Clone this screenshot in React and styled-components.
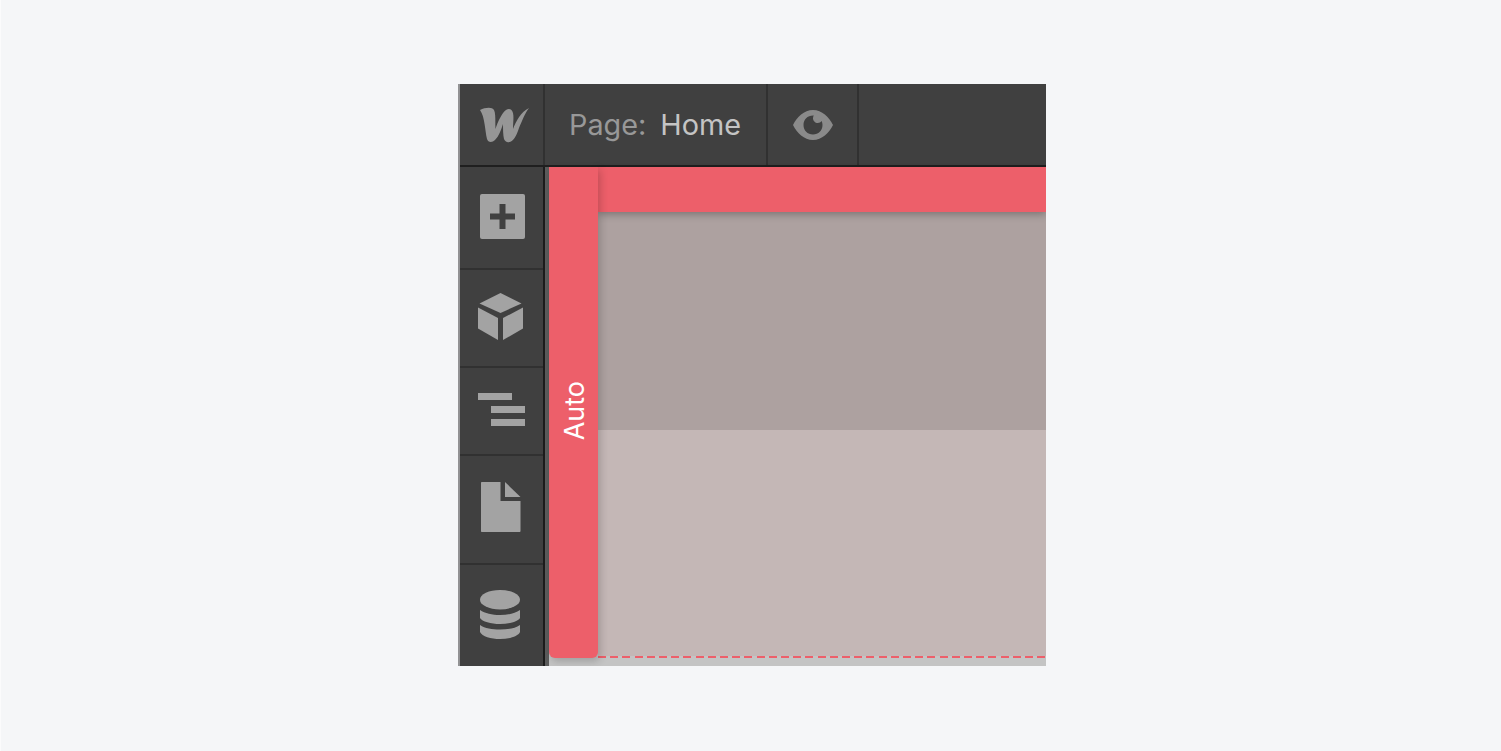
import React from "react";
import styled, { createGlobalStyle } from "styled-components";

const GlobalStyle = createGlobalStyle`
	html, body {
		margin: 0;
		padding: 0;
		background: #f5f6f8;
	}
`;

const Page = styled.div`
	width: 1501px;
	height: 751px;
	display: flex;
	align-items: flex-start;
	justify-content: flex-start;
	padding: 84px 0 0 458px;
	box-sizing: border-box;
	overflow: hidden;
	border-left: 1px solid #fbfbfc;
`;

const Frame = styled.div`
	width: 588px;
	height: 582px;
	margin-left: -1px;
	display: flex;
	flex-direction: column;
	background: #404040;
	border-left: 2px solid #929294;
	box-sizing: border-box;
	overflow: hidden;
	font-family: Inter, "Liberation Sans", sans-serif;
`;

const TopBar = styled.div`
	height: 83px;
	flex: none;
	display: flex;
	box-sizing: border-box;
	border-bottom: 2px solid #1f1f1f;
`;

const TopCell = styled.div`
	width: ${(p) => p.$width}px;
	flex: none;
	display: flex;
	align-items: center;
	justify-content: ${(p) => p.$justify || "center"};
	box-sizing: border-box;
	padding-left: ${(p) => p.$pad || 0}px;
	border-right: 2px solid #313131;
`;

const PageLabel = styled.span`
	font-size: 28.8px;
	color: #989898;
	margin-right: 14px;
`;

const PageName = styled.span`
	font-size: 28.8px;
	color: #c4c4c4;
`;

const Body = styled.div`
	flex: 1;
	display: flex;
	min-height: 0;
`;

const Sidebar = styled.div`
	width: 83px;
	flex: none;
	display: flex;
	flex-direction: column;
	border-right: 2px solid #1c1c1c;
	box-sizing: content-box;
`;

const SideItem = styled.div`
	height: ${(p) => p.$height}px;
	flex: none;
	display: flex;
	align-items: center;
	justify-content: center;
	box-sizing: border-box;
	padding: 0 ${(p) => p.$right || 0}px ${(p) => p.$up || 0}px ${(p) => p.$left || 0}px;
	border-bottom: ${(p) => (p.$last ? "none" : "2px solid #313131")};
`;

const Canvas = styled.div`
	flex: 1;
	display: flex;
	flex-direction: column;
	background: #c4c4c4;
	padding-left: 4px;
	box-shadow: inset 4px 0 0 #5c5c5c;
`;

const CanvasMain = styled.div`
	height: 491px;
	flex: none;
	display: flex;
`;

const HeightTag = styled.div`
	width: 49px;
	flex: none;
	position: relative;
	z-index: 2;
	display: flex;
	align-items: center;
	justify-content: center;
	background: #ed5f6a;
	border-radius: 0 0 6px 6px;
	box-shadow: 2px 3px 8px rgba(0, 0, 0, 0.2);
`;

const TagText = styled.span`
	writing-mode: vertical-rl;
	transform: rotate(180deg);
	color: #ffffff;
	font-size: 27px;
	margin: -4px 0 0 1px;
`;

const Sections = styled.div`
	flex: 1;
	display: flex;
	flex-direction: column;
	min-width: 0;
`;

const TopBand = styled.div`
	height: 45px;
	flex: none;
	position: relative;
	z-index: 1;
	background: #ed5f6a;
	box-shadow: 0 2px 8px rgba(0, 0, 0, 0.3);
`;

const Section = styled.div`
	flex: ${(p) => (p.$grow ? 1 : "none")};
	height: ${(p) => (p.$height ? `${p.$height}px` : "auto")};
	background: ${(p) => p.$color};
`;

const Dashes = styled.div`
	height: 2px;
	flex: none;
	background: repeating-linear-gradient(90deg, #ed5f6a 0 8px, transparent 8px 12.2px);
`;

const ICON = "#a3a3a3";

const WebflowLogo = () => (
	<svg width="49" height="36" viewBox="0 0 49 36">
		<path
			fill="#969696"
			d="M0 3C5 0.500 12 -0.500 14 3C16 7 15 15 15.500 22C18 14 22 6 26 3C29 1 32 2 33 6C34 10 33 16 33 22C36 14 41 5 49 1C45 6 42 14 39 21C37 27 35 32 31 34.500C28 36 25 35 24 32C23 28 23 22 23 17C21 23 19 29 15 33C12 36 8 35.500 7 32C5 24 5 10 0 3Z"
		/>
	</svg>
);

const EyeIcon = () => (
	<svg width="40" height="30" viewBox="0 0 40 30">
		<path
			fill="#8a8a8a"
			fillRule="evenodd"
			d="M20 0C29 0 36 7 40 15C36 23 29 30 20 30C11 30 4 23 0 15C4 7 11 0 20 0ZM20 5.500C14.500 5.500 10.500 9.500 10.500 15C10.500 20.500 14.500 24.500 20 24.500C25.500 24.500 29.500 20.500 29.500 15C29.500 13.500 29.200 12.200 28.700 11C27.800 12.300 26.300 13 24.800 13C22.200 13 20 10.800 20 8.200C20 7.200 20.300 6.300 20.800 5.500Z"
		/>
	</svg>
);

const PlusIcon = () => (
	<svg width="45" height="45" viewBox="0 0 45 45">
		<rect width="45" height="45" rx="2" fill={ICON} />
		<path fill="#404040" d="M19.500 10h6v9.500h9.500v6h-9.500V35h-6v-9.500H10v-6h9.500Z" />
	</svg>
);

const BoxIcon = () => (
	<svg width="45" height="47" viewBox="0 0 45 47">
		<path fill={ICON} d="M22.500 0L43.500 10.500L22.500 20L1.500 10.500Z" />
		<path fill={ICON} d="M0 14.500L20 25V47L0 35.500Z" />
		<path fill={ICON} d="M45 14.500V35.500L25 47V25Z" />
	</svg>
);

const NavigatorIcon = () => (
	<svg width="47" height="33" viewBox="0 0 47 33">
		<rect x="0" y="0" width="34" height="7" fill={ICON} />
		<rect x="13" y="13" width="34" height="7" fill={ICON} />
		<rect x="13" y="26" width="34" height="7" fill={ICON} />
	</svg>
);

const PageIcon = () => (
	<svg width="40" height="50" viewBox="0 0 40 50">
		<path fill={ICON} d="M1 0H19.500V19H39.500V49C39.500 49.600 39.100 50 38.500 50H1C0.400 50 0 49.600 0 49V1C0 0.400 0.400 0 1 0Z" />
		<path fill={ICON} d="M24 0L39.500 15H24Z" />
	</svg>
);

const DatabaseIcon = () => (
	<svg width="40" height="49" viewBox="0 0 40 49">
		<ellipse cx="20" cy="9.700" rx="20" ry="9.700" fill={ICON} />
		<path fill={ICON} d="M0 20C5 23.500 12 25 20 25C28 25 35 23.500 40 20V28C38 31.500 29 34 20 34C11 34 2 31.500 0 28Z" />
		<path fill={ICON} d="M0 35C5 38.500 12 39.500 20 39.500C28 39.500 35 38.500 40 35V42C38 46.500 29 49 20 49C11 49 2 46.500 0 42Z" />
	</svg>
);

const App = () => (
	<Page>
		<GlobalStyle />
		<Frame>
			<TopBar>
				<TopCell $width={85} $pad={6}>
					<WebflowLogo />
				</TopCell>
				<TopCell $width={223} $justify="flex-start" $pad={24}>
					<PageLabel>Page:</PageLabel>
					<PageName>Home</PageName>
				</TopCell>
				<TopCell $width={91}>
					<EyeIcon />
				</TopCell>
			</TopBar>
			<Body>
				<Sidebar>
					<SideItem $height={103} $up={3} $left={2}>
						<PlusIcon />
					</SideItem>
					<SideItem $height={98} $up={3} $right={2}>
						<BoxIcon />
					</SideItem>
					<SideItem $height={88} $up={4}>
						<NavigatorIcon />
					</SideItem>
					<SideItem $height={109} $up={6} $right={2}>
						<PageIcon />
					</SideItem>
					<SideItem $height={101} $up={2} $right={3} $last>
						<DatabaseIcon />
					</SideItem>
				</Sidebar>
				<Canvas>
					<CanvasMain>
						<HeightTag>
							<TagText>Auto</TagText>
						</HeightTag>
						<Sections>
							<TopBand />
							<Section $height={218} $color="#ada1a0" />
							<Section $grow $color="#c4b7b6" />
							<Dashes />
						</Sections>
					</CanvasMain>
				</Canvas>
			</Body>
		</Frame>
	</Page>
);

export default App;
